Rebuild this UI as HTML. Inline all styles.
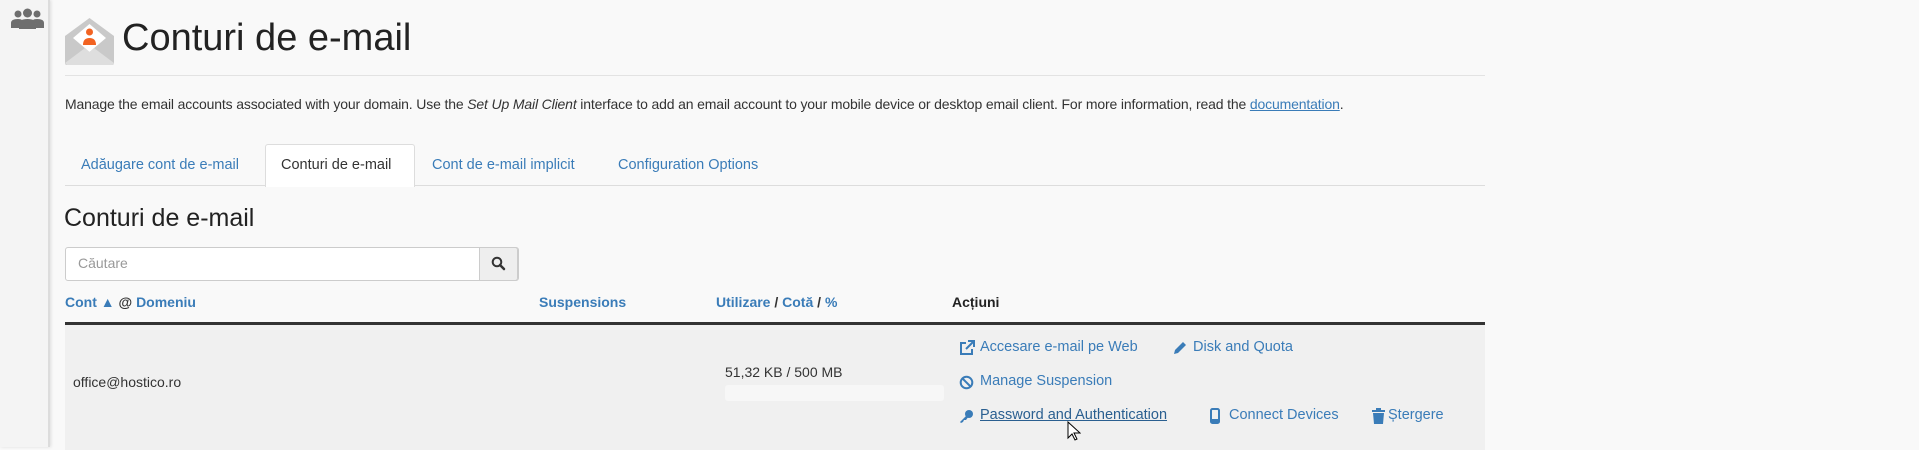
<!DOCTYPE html>
<html><head><meta charset="utf-8"><style>
body{margin:0;width:1919px;height:447px;overflow:hidden;background:#f9f9f9;font-family:"Liberation Sans",sans-serif;color:#333;position:relative}
.a{position:absolute;white-space:nowrap}
.lk{color:#3a7cb8}
.sb{position:absolute;left:0;top:0;width:48px;height:447px;background:#f4f4f4;border-right:2px solid #dcdcdc;box-shadow:1px 0 3px #ddd}
.tab{position:absolute;top:157px;font-size:14.5px;color:#3a7cb8}
.act{position:absolute;font-size:14.5px;color:#3a7cb8;white-space:nowrap}
</style></head><body>
<div class="sb"></div>
<svg class="a" style="left:10px;top:8px" width="35" height="22" viewBox="0 0 35 22"><g fill="#6e6e6e"><circle cx="8" cy="6" r="3.5"/><circle cx="27" cy="6" r="3.5"/><circle cx="17.5" cy="5" r="4.5"/><path d="M1 20v-5q0-4 7-4q3 0 4 1q-3 2-3 5v3z"/><path d="M34 20v-5q0-4-7-4q-3 0-4 1q3 2 3 5v3z"/><path d="M9 21v-5q0-5 8.5-5t8.5 5v5z"/></g></svg>
<svg class="a" style="left:65px;top:18px" width="49" height="47" viewBox="0 0 49 47"><path d="M0 18L24.5 0L49 18V45q0 2-2 2H2q-2 0-2-2z" fill="#c9c9c9"/><path d="M8 20L24.5 6L41 20L24.5 34z" fill="#fff"/><circle cx="24.5" cy="14" r="3.5" fill="#f26322"/><path d="M18 27q0-7 6.5-7t6.5 7z" fill="#f26322"/><path d="M0 45L20 30L24.5 34L29 30L49 45q0 2-2 2H2z" fill="#dedede"/></svg>
<div class="a" style="left:122px;top:17px;font-size:38px;color:#222">Conturi de e-mail</div>
<div class="a" style="left:65px;top:75px;width:1420px;height:1px;background:#e3e3e3"></div>
<div class="a" style="left:65px;top:96px;font-size:14px;letter-spacing:-0.15px">Manage the email accounts associated with your domain. Use the <i>Set Up Mail Client</i> interface to add an email account to your mobile device or desktop email client. For more information, read the <u class="lk">documentation</u>.</div>
<div class="a" style="left:65px;top:185px;width:1420px;height:1px;background:#ddd"></div>
<div class="a" style="left:265px;top:144px;width:148px;height:42px;background:#fff;border:1px solid #ddd;border-bottom:none;border-radius:3px 3px 0 0"></div>
<div class="tab" style="left:81px">Adăugare cont de e-mail</div>
<div class="tab" style="left:281px;color:#333">Conturi de e-mail</div>
<div class="tab" style="left:432px">Cont de e-mail implicit</div>
<div class="tab" style="left:618px">Configuration Options</div>
<div class="a" style="left:64px;top:204px;font-size:25px;color:#222">Conturi de e-mail</div>
<div class="a" style="left:65px;top:247px;width:452px;height:32px;background:#fff;border:1px solid #ccc;border-radius:3px"></div>
<div class="a" style="left:479px;top:247px;width:39px;height:34px;background:#eee;border:1px solid #ccc;border-radius:0 3px 3px 0;box-sizing:border-box"></div>
<svg class="a" style="left:491px;top:256px" width="15" height="15" viewBox="0 0 15 15"><circle cx="6" cy="6" r="4.3" fill="none" stroke="#333" stroke-width="2"/><path d="M9 9l4 4" stroke="#333" stroke-width="2.5" stroke-linecap="round"/></svg>
<div class="a" style="left:78px;top:255px;font-size:14px;color:#999">Căutare</div>
<div class="a" style="left:65px;top:294px;font-size:14px;font-weight:bold"><span class="lk">Cont ▲</span> @ <span class="lk">Domeniu</span></div>
<div class="a lk" style="left:539px;top:294px;font-size:14px;font-weight:bold">Suspensions</div>
<div class="a" style="left:716px;top:294px;font-size:14px;font-weight:bold"><span class="lk">Utilizare</span> / <span class="lk">Cotă</span> / <span class="lk">%</span></div>
<div class="a" style="left:952px;top:294px;font-size:14px;font-weight:bold;color:#222">Acțiuni</div>
<div class="a" style="left:65px;top:322px;width:1420px;height:125px;background:#f0f0f0;border-top:3px solid #333"></div>
<div class="a" style="left:73px;top:374px;font-size:14px">office@hostico.ro</div>
<div class="a" style="left:725px;top:364px;font-size:14px">51,32 KB / 500 MB</div>
<div class="a" style="left:725px;top:385px;width:219px;height:16px;background:#f7f7f7;border-radius:3px"></div>
<svg class="a" style="left:959px;top:340px" width="16" height="16" viewBox="0 0 16 16"><path d="M7 3H2v11h11V9" fill="none" stroke="#3a7cb8" stroke-width="2"/><path d="M9 1h6v6M15 1L7 9" fill="none" stroke="#3a7cb8" stroke-width="2"/></svg>
<div class="act" style="left:980px;top:339px">Accesare e-mail pe Web</div>
<svg class="a" style="left:1173px;top:341px" width="14" height="14" viewBox="0 0 14 14"><path d="M1 13l1-4 8-8 3 3-8 8z" fill="#3a7cb8"/></svg>
<div class="act" style="left:1193px;top:339px">Disk and Quota</div>
<svg class="a" style="left:959px;top:375px" width="15" height="15" viewBox="0 0 15 15"><circle cx="7.5" cy="7.5" r="5.8" fill="none" stroke="#3a7cb8" stroke-width="2"/><path d="M3.5 3.5l8 8" stroke="#3a7cb8" stroke-width="2"/></svg>
<div class="act" style="left:980px;top:373px">Manage Suspension</div>
<svg class="a" style="left:959px;top:409px" width="15" height="15" viewBox="0 0 15 15"><circle cx="10" cy="5" r="4" fill="#3a7cb8"/><path d="M8 6L1 13l1 1 2-1 1-2 2 0 3-4z" fill="#3a7cb8"/></svg>
<div class="act" style="left:980px;top:407px;color:#2a5f90;text-decoration:underline">Password and Authentication</div>
<svg class="a" style="left:1210px;top:408px" width="10" height="16" viewBox="0 0 10 16"><rect x="1" y="1" width="8" height="14" rx="1.5" fill="none" stroke="#3a7cb8" stroke-width="2"/><rect x="1" y="11" width="8" height="4" fill="#3a7cb8"/></svg>
<div class="act" style="left:1229px;top:407px">Connect Devices</div>
<svg class="a" style="left:1372px;top:408px" width="13" height="16" viewBox="0 0 13 16"><rect x="0" y="2" width="13" height="2" fill="#3a7cb8"/><rect x="4" y="0" width="5" height="2" fill="#3a7cb8"/><path d="M1 5h11l-1 11H2z" fill="#3a7cb8"/></svg>
<div class="act" style="left:1388px;top:407px">Ștergere</div>
<svg class="a" style="left:1067px;top:421px" width="14" height="20" viewBox="0 0 14 20"><path d="M1 1v16l4-4 3 6 2-1-3-6h6z" fill="#fff" stroke="#000" stroke-width="1"/></svg>
</body></html>
